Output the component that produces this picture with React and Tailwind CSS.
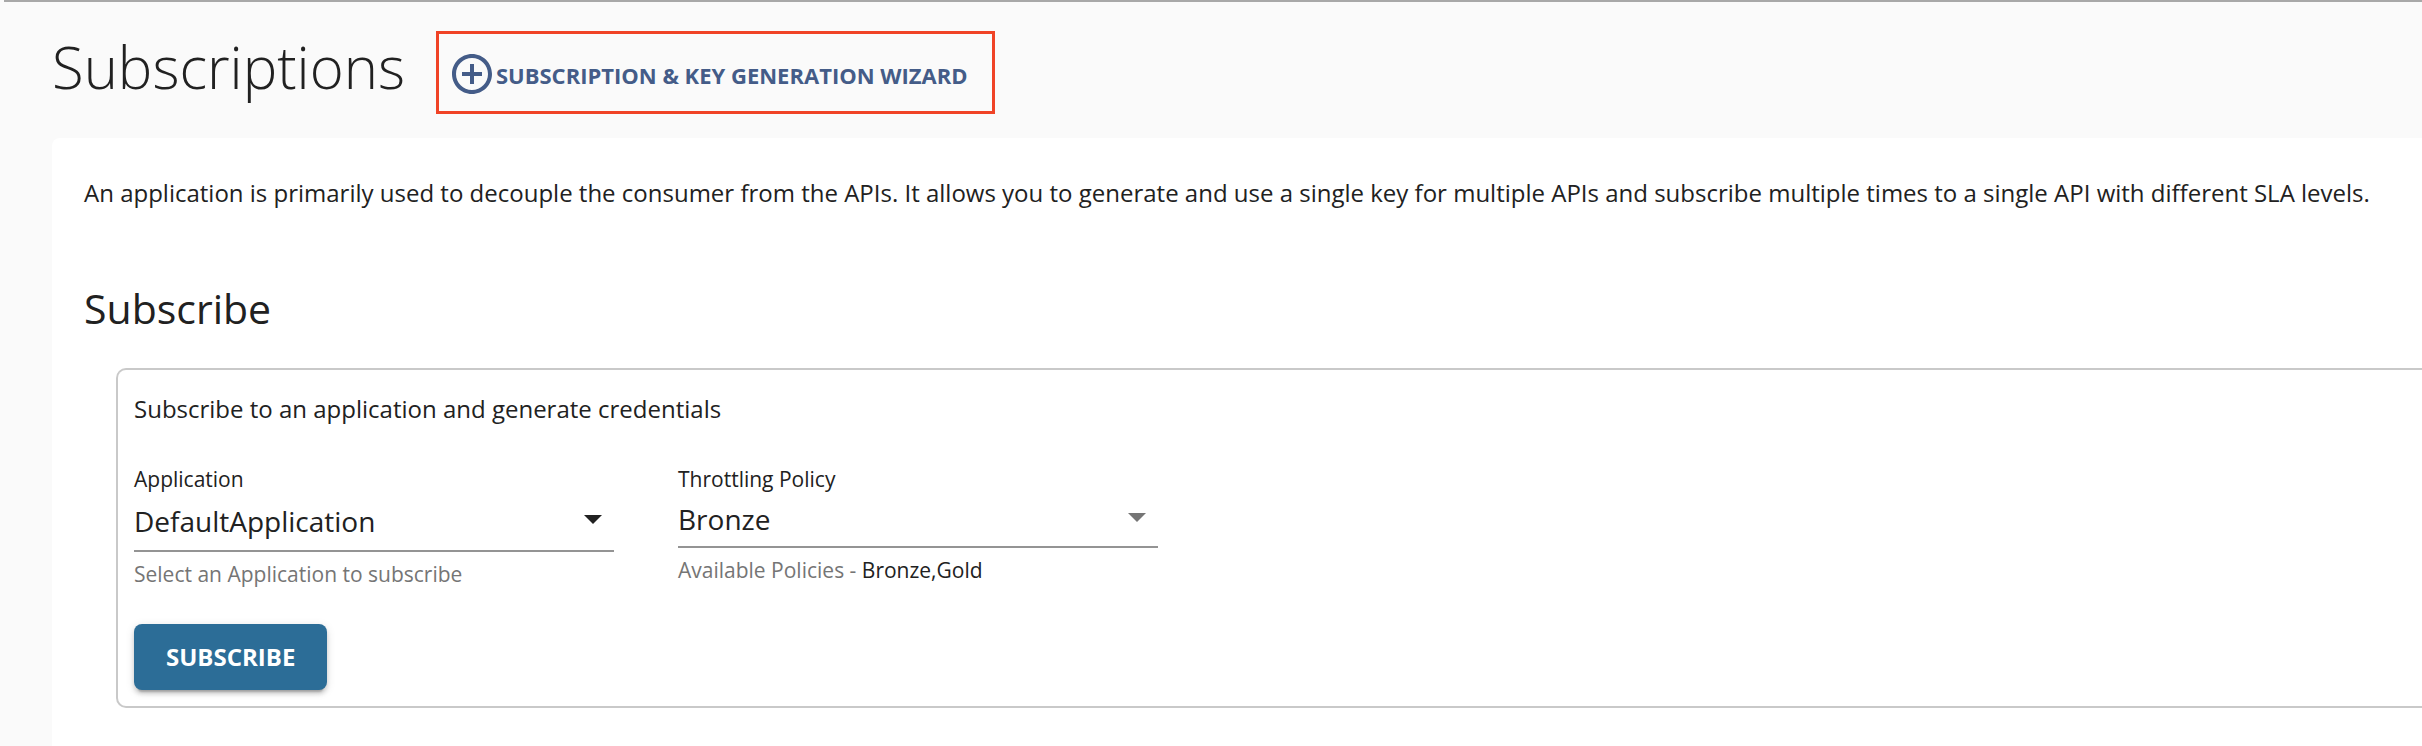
import { MdAddCircleOutline } from "react-icons/md";

function SelectField({ id, label, options, arrowClass, selectClass, helper }) {
  return (
    <div className="w-[480px]">
      <label htmlFor={id} className="block text-[21px] leading-7">
        {label}
      </label>
      <div className="relative">
        <select
          id={id}
          defaultValue={options[0]}
          className={`block w-full appearance-none border-b-2 border-[#949494] bg-transparent text-[28px] leading-10 outline-none ${selectClass}`}
        >
          {options.map((option) => (
            <option key={option}>{option}</option>
          ))}
        </select>
        <svg
          viewBox="0 0 18 9"
          aria-hidden="true"
          className={`pointer-events-none absolute right-3 h-[9px] w-[18px] fill-current ${arrowClass}`}
        >
          <path d="M0 0h18l-9 9z" />
        </svg>
      </div>
      <p className="mt-2 text-[21px] leading-7 text-[#757575]">{helper}</p>
    </div>
  );
}

export default function App() {
  return (
    <main className="flex min-h-screen flex-col bg-[#fafafa] font-['Open_Sans','Noto_Sans',sans-serif] text-[#212121]">
      <div className="ml-1 h-0.5 bg-[#a8a8a8]" />
      <header className="flex items-start gap-[31px] pt-[29px] pb-6 pl-[52px]">
        <h1 className="text-[58px] leading-[72px] font-light">Subscriptions</h1>
        <button
          type="button"
          className="flex items-center border-[3px] border-[#f04326] pt-4 pr-6 pb-[13px] pl-[9px] text-[22px] leading-8 font-bold text-[#445c88] uppercase"
        >
          <MdAddCircleOutline className="size-12" aria-hidden="true" />
          <span className="pt-0.5">Subscription &amp; Key Generation Wizard</span>
        </button>
      </header>

      <section className="ml-[52px] flex-1 rounded-tl-lg bg-white pt-[37px] pb-9 pl-8">
        <p className="text-2xl leading-9">
          An application is primarily used to decouple the consumer from the APIs. It allows you to
          generate and use a single key for multiple APIs and subscribe multiple times to a single
          API with different SLA levels.
        </p>
        <h2 className="mt-[69px] text-[41px] leading-[56px]">Subscribe</h2>

        <form
          onSubmit={(event) => event.preventDefault()}
          className="mt-8 ml-8 rounded-l-[10px] border-2 border-r-0 border-[#c9c9c9] px-4 pt-[21px] pb-4"
        >
          <p className="text-2xl leading-9">Subscribe to an application and generate credentials</p>
          <div className="mt-[38px] flex flex-wrap items-start gap-16">
            <SelectField
              id="application"
              label="Application"
              options={["DefaultApplication"]}
              selectClass="pt-2 pb-[9px]"
              arrowClass="top-[22px]"
              helper="Select an Application to subscribe"
            />
            <SelectField
              id="policy"
              label="Throttling Policy"
              options={["Bronze", "Gold"]}
              selectClass="pt-1.5 pb-[7px]"
              arrowClass="top-5 text-[#757575]"
              helper={
                <>
                  Available Policies - <span className="text-[#212121]">Bronze,Gold</span>
                </>
              }
            />
          </div>
          <button
            type="submit"
            className="mt-9 block h-[66px] rounded-lg bg-[#2c6d97] px-8 text-2xl font-bold text-white uppercase shadow-[0_6px_2px_-4px_rgba(0,0,0,0.2),0_4px_4px_0_rgba(0,0,0,0.14),0_2px_10px_0_rgba(0,0,0,0.12)]"
          >
            Subscribe
          </button>
        </form>
      </section>
    </main>
  );
}
